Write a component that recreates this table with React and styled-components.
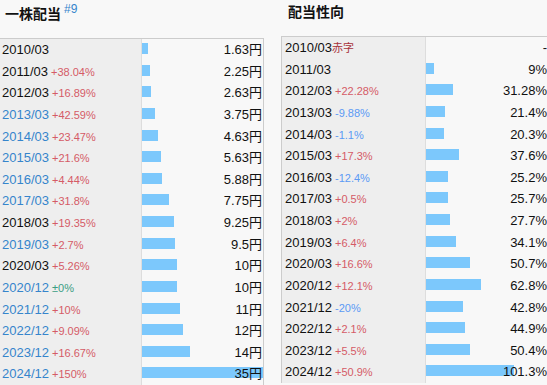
import React from "react";
import styled, { createGlobalStyle } from "styled-components";

const GlobalStyle = createGlobalStyle`
  html, body {
    margin: 0;
    padding: 0;
    background: #f8f8f8;
    overflow: hidden;
  }
  body {
    font-family: "Liberation Sans", "Noto Sans CJK JP", sans-serif;
    color: #111;
  }
`;

const Page = styled.div`
  display: flex;
  align-items: flex-start;
  gap: 17px;
  width: 565px;
`;

const Column = styled.section`
  display: flex;
  flex-direction: column;
  width: ${({ $width }) => $width}px;
  flex: none;
`;

const Heading = styled.h2`
  margin: 0;
  height: ${({ $height }) => $height}px;
  padding-left: ${({ $indent }) => $indent}px;
  padding-top: ${({ $top }) => $top}px;
  box-sizing: border-box;
  font-family: "Noto Sans CJK JP", sans-serif;
  font-size: 14px;
  font-weight: 700;
  line-height: 16px;
  color: #111;
`;

const Note = styled.sup`
  font-family: "Liberation Sans", sans-serif;
  font-size: 12px;
  font-weight: 400;
  color: #3585cc;
  margin-left: 3px;
  vertical-align: 6px;
  line-height: 0;
`;

const Table = styled.div`
  border-top: 1px solid #cccccc;
  border-right: 1px solid #cccccc;
  border-left: ${({ $edge }) => ($edge ? "1px solid #cccccc" : "none")};
`;

const Row = styled.div`
  display: grid;
  grid-template-columns: ${({ $label }) => $label}px 1fr;
  height: 21.625px;
  box-sizing: border-box;
  border-bottom: 1px solid #cccccc;
`;

const Label = styled.div`
  background: #eeeeee;
  border-right: 1px solid #dddddd;
  padding-left: ${({ $indent }) => $indent}px;
  font-size: 13px;
  line-height: 22px;
  white-space: nowrap;
  color: ${({ $link }) => ($link ? "#3585cc" : "#111")};
`;

const changeColors = {
  up: "#d55b66",
  down: "#5b9af5",
  flat: "#3a9d84",
  loss: "#a8323a",
};

const Change = styled.span`
  font-size: 11px;
  margin-left: ${({ $tone }) => ($tone === "loss" ? 0 : 3)}px;
  color: ${({ $tone }) => changeColors[$tone]};
`;

const Value = styled.div`
  position: relative;
  background: #f8f8f8;
  text-align: right;
  padding-right: 1px;
  font-size: 13px;
  line-height: 22px;
  white-space: nowrap;
`;

const Bar = styled.div`
  position: absolute;
  left: 0;
  top: 4px;
  height: 11px;
  background: #7cc8fc;
`;

const Amount = styled.span`
  position: relative;
`;

const dividends = [
  ["2010/03", null, 1.63, false],
  ["2011/03", "+38.04%", 2.25, false],
  ["2012/03", "+16.89%", 2.63, false],
  ["2013/03", "+42.59%", 3.75, true],
  ["2014/03", "+23.47%", 4.63, true],
  ["2015/03", "+21.6%", 5.63, true],
  ["2016/03", "+4.44%", 5.88, true],
  ["2017/03", "+31.8%", 7.75, true],
  ["2018/03", "+19.35%", 9.25, false],
  ["2019/03", "+2.7%", 9.5, true],
  ["2020/03", "+5.26%", 10, false],
  ["2020/12", "±0%", 10, true],
  ["2021/12", "+10%", 11, true],
  ["2022/12", "+9.09%", 12, true],
  ["2023/12", "+16.67%", 14, true],
  ["2024/12", "+150%", 35, true],
];

const payout = [
  ["2010/03", "赤字", null],
  ["2011/03", null, 9],
  ["2012/03", "+22.28%", 31.28],
  ["2013/03", "-9.88%", 21.4],
  ["2014/03", "-1.1%", 20.3],
  ["2015/03", "+17.3%", 37.6],
  ["2016/03", "-12.4%", 25.2],
  ["2017/03", "+0.5%", 25.7],
  ["2018/03", "+2%", 27.7],
  ["2019/03", "+6.4%", 34.1],
  ["2020/03", "+16.6%", 50.7],
  ["2020/12", "+12.1%", 62.8],
  ["2021/12", "-20%", 42.8],
  ["2022/12", "+2.1%", 44.9],
  ["2023/12", "+5.5%", 50.4],
  ["2024/12", "+50.9%", 101.3],
];

const toneOf = (text) => {
  if (text === "赤字") return "loss";
  if (text.startsWith("±")) return "flat";
  if (text.startsWith("-")) return "down";
  return "up";
};

const App = () => {
  const maxDiv = Math.max(...dividends.map((d) => d[2]));
  return (
    <>
      <GlobalStyle />
      <Page>
        <Column $width={264}>
          <Heading $height={38} $indent={5} $top={5}>
            一株配当<Note>#9</Note>
          </Heading>
          <Table>
            {dividends.map(([period, change, yen, link]) => (
              <Row key={period} $label={142}>
                <Label $indent={2} $link={link}>
                  {period}
                  {change && <Change $tone={toneOf(change)}>{change}</Change>}
                </Label>
                <Value>
                  <Bar style={{ width: `${(yen / maxDiv) * 100}%` }} />
                  <Amount>{yen}円</Amount>
                </Value>
              </Row>
            ))}
          </Table>
        </Column>
        <Column $width={268}>
          <Heading $height={36} $indent={7} $top={3}>
            配当性向
          </Heading>
          <Table $edge>
            {payout.map(([period, change, pct]) => (
              <Row key={period} $label={144}>
                <Label $indent={3}>
                  {period}
                  {change && <Change $tone={toneOf(change)}>{change}</Change>}
                </Label>
                <Value>
                  {pct !== null && <Bar style={{ width: `${(pct / 140) * 100}%` }} />}
                  <Amount>{pct === null ? "-" : `${pct}%`}</Amount>
                </Value>
              </Row>
            ))}
          </Table>
        </Column>
      </Page>
    </>
  );
};

export default App;
